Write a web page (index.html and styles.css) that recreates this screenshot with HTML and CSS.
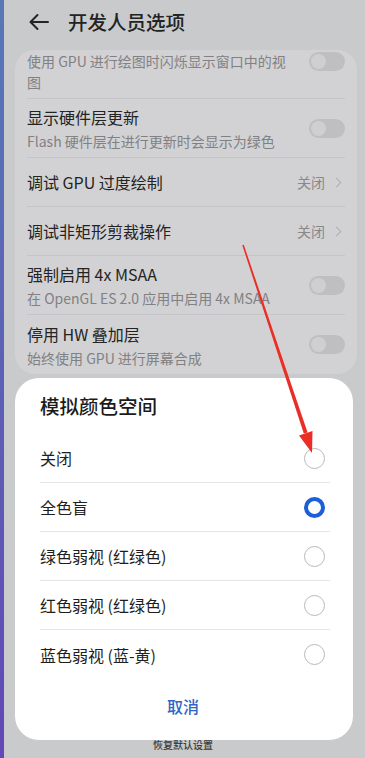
FILE: index.html
```html
<!DOCTYPE html>
<html lang="zh-CN">
<head>
<meta charset="utf-8">
<link rel="stylesheet" href="styles.css">
</head>
<body>
<div class="screen">
  <div class="edge"></div>
  <div class="page">
    <header class="topbar">
      <svg class="back" width="22" height="18" viewBox="0 0 22 18"><path d="M20 9H2.5M9.5 2L2.5 9L9.5 16" fill="none" stroke="#242424" stroke-width="2" stroke-linecap="round" stroke-linejoin="round"/></svg>
      <h1 class="title">开发人员选项</h1>
    </header>
    <section class="card">
      <div class="row first">
        <div class="text"><div class="sub wrap">使用 GPU 进行绘图时闪烁显示窗口中的视图</div></div>
        <span class="toggle"></span>
      </div>
      <div class="row two">
        <div class="text"><div class="name">显示硬件层更新</div><div class="sub">Flash 硬件层在进行更新时会显示为绿色</div></div>
        <span class="toggle"></span>
      </div>
      <div class="row one">
        <div class="text"><div class="name">调试 GPU 过度绘制</div></div>
        <span class="value">关闭</span><span class="chev"></span>
      </div>
      <div class="row one">
        <div class="text"><div class="name">调试非矩形剪裁操作</div></div>
        <span class="value">关闭</span><span class="chev"></span>
      </div>
      <div class="row two">
        <div class="text"><div class="name">强制启用 4x MSAA</div><div class="sub">在 OpenGL ES 2.0 应用中启用 4x MSAA</div></div>
        <span class="toggle"></span>
      </div>
      <div class="row two last">
        <div class="text"><div class="name">停用 HW 叠加层</div><div class="sub">始终使用 GPU 进行屏幕合成</div></div>
        <span class="toggle"></span>
      </div>
    </section>
    <div class="reset">恢复默认设置</div>
  </div>

  <div class="sheet">
    <h2 class="sheet-title">模拟颜色空间</h2>
    <ul class="options">
      <li class="opt"><span>关闭</span><span class="radio"></span></li>
      <li class="opt"><span>全色盲</span><span class="radio on"></span></li>
      <li class="opt"><span>绿色弱视 (红绿色)</span><span class="radio"></span></li>
      <li class="opt"><span>红色弱视 (红绿色)</span><span class="radio"></span></li>
      <li class="opt"><span>蓝色弱视 (蓝-黄)</span><span class="radio"></span></li>
    </ul>
    <div class="cancel">取消</div>
  </div>

  <svg class="arrow" width="365" height="758" viewBox="0 0 365 758">
    <polygon points="242.3,245.2 243.8,244.8 307.6,432.4 303.8,433.6" fill="#ea2e26"/>
    <polygon points="312,453 299,435.5 312.5,431" fill="#ea2e26"/>
  </svg>
</div>
</body>
</html>
```
FILE: styles.css
```css
* { box-sizing: border-box; margin: 0; padding: 0; }
html, body { width: 365px; height: 758px; overflow: hidden; }
body {
  background: #c9cacc;
  font-family: "Noto Sans CJK SC", "Noto Sans", sans-serif;
  color: #242424;
}
.screen { position: relative; display: flex; width: 365px; height: 758px; }
.edge {
  width: 4px;
  flex: none;
  background: linear-gradient(#5778b6, #6248b6);
}
.page {
  flex: 1;
  display: flex;
  flex-direction: column;
  padding: 0 8px 0 11px;
}
.topbar {
  height: 50px;
  display: flex;
  align-items: center;
  padding: 0 0 6px 13px;
}
.back { flex: none; }
.title {
  margin-left: 18px;
  font-size: 19.5px;
  font-weight: 500;
  color: #232323;
  line-height: 28px;
}
.card {
  background: #d2d2d4;
  border-radius: 20px;
  padding: 0 12px;
}
.row {
  display: flex;
  align-items: center;
  border-bottom: 1px solid #c5c5c7;
}
.row.last { border-bottom: none; }
.row.first { height: 49px; padding-top: 1px; align-items: flex-start; }
.row.first .toggle { margin-top: 1px; }
.row.two { height: 59px; }
.row.one { height: 49px; }
.text { flex: 1; min-width: 0; }
.name { font-size: 16px; line-height: 22px; color: #232323; }
.sub { font-size: 14px; line-height: 18px; color: #818183; margin-top: 4px; }
.sub.wrap { max-width: 266px; line-height: 21px; margin-top: 0; }
.toggle {
  flex: none;
  width: 36px;
  height: 19px;
  border-radius: 10px;
  background: #bfbfc1;
  position: relative;
  margin-left: 8px;
}
.toggle::after {
  content: "";
  position: absolute;
  left: 2px;
  top: 2px;
  width: 15px;
  height: 15px;
  border-radius: 50%;
  background: #cfcfd1;
}
.value { font-size: 14px; color: #88888a; }
.chev {
  width: 7px;
  height: 7px;
  border-top: 1.5px solid #aeaeb0;
  border-right: 1.5px solid #aeaeb0;
  transform: rotate(45deg);
  margin: 0 5px 0 8px;
}
.reset {
  margin-top: auto;
  text-align: center;
  font-size: 10px;
  line-height: 12px;
  color: #3a3a3a;
  padding: 0 6px 7px 0;
  font-weight: 500;
}
.sheet {
  position: absolute;
  left: 15px;
  top: 378px;
  width: 338px;
  height: 362px;
  background: #ffffff;
  border-radius: 24px;
  padding: 14px 23px 0 25px;
  display: flex;
  flex-direction: column;
}
.sheet-title {
  font-size: 19.5px;
  font-weight: 500;
  line-height: 28px;
  color: #1b1b1b;
}
.options { list-style: none; margin-top: 14px; }
.opt {
  height: 49px;
  display: flex;
  align-items: center;
  justify-content: space-between;
  border-bottom: 1px solid #e6e6e6;
  font-size: 16px;
  color: #1e1e1e;
  padding-right: 5px;
}
.opt:last-child { border-bottom: none; }
.radio {
  width: 21px;
  height: 21px;
  border-radius: 50%;
  border: 1.3px solid #b8b8b8;
}
.radio.on { border: 4.5px solid #1c5fd8; }
.cancel {
  margin-top: 15px;
  text-align: center;
  font-size: 16px;
  line-height: 24px;
  color: #2e66c4;
  font-weight: 500;
  padding-right: 4px;
}
.arrow { position: absolute; left: 0; top: 0; pointer-events: none; }
```
